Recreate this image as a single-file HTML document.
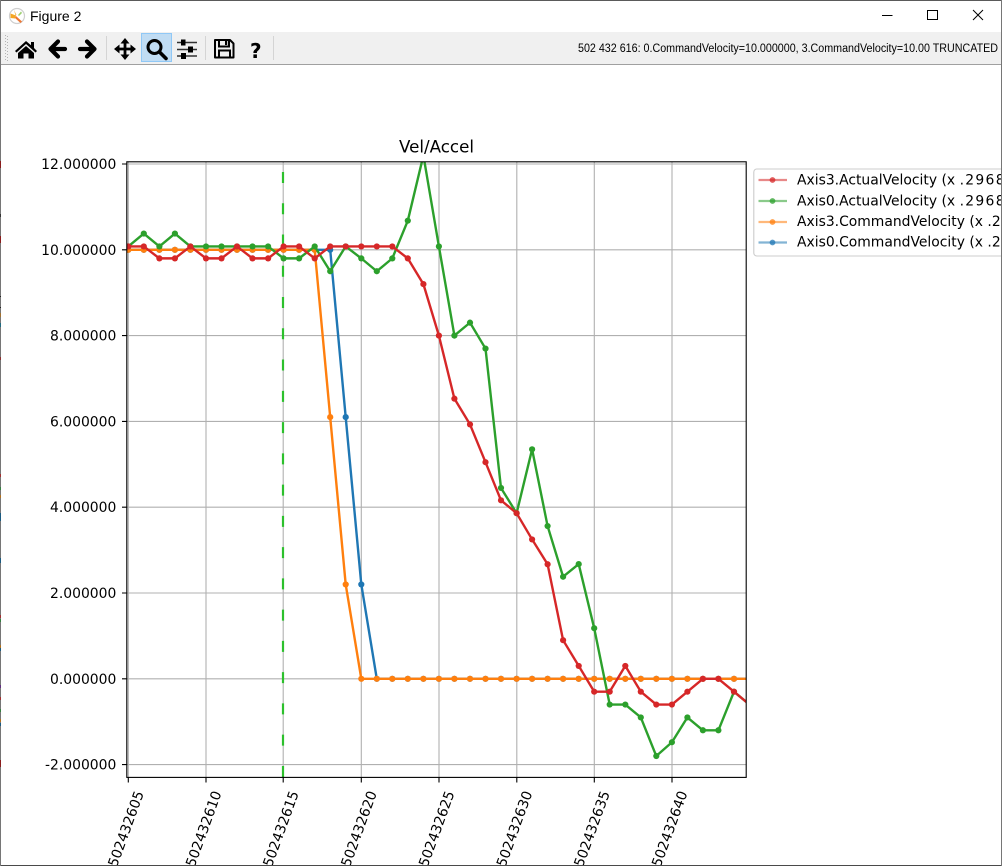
<!DOCTYPE html>
<html>
<head>
<meta charset="utf-8">
<title>Figure 2</title>
<style>
html,body{margin:0;padding:0;width:1002px;height:866px;overflow:hidden;background:#fff}
svg{display:block}
.d{font-family:"DejaVu Sans",sans-serif;font-size:13.9px;fill:#000}
.l{fill:none;stroke-linejoin:round;stroke-linecap:square}
</style>
</head>
<body>
<svg width="1002" height="866" viewBox="0 0 1002 866" xmlns="http://www.w3.org/2000/svg">
<defs>
<clipPath id="ax"><rect x="127" y="162" width="619" height="615"/></clipPath>
<clipPath id="lg"><rect x="750" y="160" width="251" height="110"/></clipPath>
<marker id="mr" markerUnits="userSpaceOnUse" markerWidth="10" markerHeight="10" refX="5" refY="5"><circle cx="5" cy="5" r="3.1" fill="#d62728"/></marker>
<marker id="mg" markerUnits="userSpaceOnUse" markerWidth="10" markerHeight="10" refX="5" refY="5"><circle cx="5" cy="5" r="3.1" fill="#2ca02c"/></marker>
<marker id="mo" markerUnits="userSpaceOnUse" markerWidth="10" markerHeight="10" refX="5" refY="5"><circle cx="5" cy="5" r="3.1" fill="#ff7f0e"/></marker>
<marker id="mb" markerUnits="userSpaceOnUse" markerWidth="10" markerHeight="10" refX="5" refY="5"><circle cx="5" cy="5" r="3.1" fill="#1f77b4"/></marker>
</defs>

<!-- title bar -->
<circle cx="17" cy="16" r="7.5" fill="#fff" stroke="#cfcfcf" stroke-width="1.2"/>
<path d="M10.5 13.5L16 15.5L15 18.5L10.5 18Z" fill="#f5a623"/>
<path d="M16 16L22 21.5L20.5 23L15 18Z" fill="#ee7733"/>
<path d="M14 10L16.5 15L15.5 15.5Z" fill="#f0b050"/>
<path d="M18 15L21 11.5L22 13L19 16Z" fill="#9ccf70"/>
<text x="30" y="21" font-family="'Liberation Sans',sans-serif" font-size="14" fill="#000">Figure 2</text>
<path d="M882 15.5H892.5" stroke="#000" stroke-width="1"/>
<rect x="927.5" y="10.5" width="10" height="9" fill="none" stroke="#000" stroke-width="1"/>
<path d="M973 10L983 20M983 10L973 20" stroke="#000" stroke-width="1"/>

<!-- toolbar -->
<rect x="0" y="32" width="1002" height="32" fill="#f0f0f0"/>
<rect x="0" y="64" width="1002" height="1" fill="#a0a0a0"/>
<path d="M5.5 35V61M7.5 36V61" stroke="#b4b4b4" stroke-width="1" stroke-dasharray="1 2"/>
<path d="M106.5 36V60M205.5 36V60M273.5 36V60" stroke="#d4d4d4" stroke-width="1"/>
<rect x="141.5" y="33.5" width="30" height="28" fill="#c0dcf3" stroke="#90c8f6" stroke-width="1"/>

<!-- home -->
<path d="M26 41L31 45.3V42H34V48L37 51L35.5 52.5L26 44L16.5 52.5L15 51Z" fill="#000"/>
<path d="M26 46L34 53V58.5H28.5V53.5H23.5V58.5H18V53Z" fill="#000"/>
<!-- back -->
<path d="M65 49H51M58 41.5L50.5 49L58 56.5" fill="none" stroke="#000" stroke-width="4.2" stroke-linecap="round" stroke-linejoin="round"/>
<!-- forward -->
<path d="M80 49H94M87 41.5L94.5 49L87 56.5" fill="none" stroke="#000" stroke-width="4.2" stroke-linecap="round" stroke-linejoin="round"/>
<!-- move -->
<path d="M117 49H133M125 41V57" stroke="#000" stroke-width="2.8"/>
<path d="M125 38L129.5 43.5H120.5ZM125 60L129.5 54.5H120.5ZM114 49L119.5 44.5V53.5ZM136 49L130.5 44.5V53.5Z" fill="#000"/>
<!-- zoom -->
<circle cx="154.5" cy="47" r="6.5" fill="none" stroke="#000" stroke-width="3"/>
<path d="M159.5 52L166 58.5" stroke="#000" stroke-width="3.6" stroke-linecap="round"/>
<!-- configure -->
<path d="M177 42.5H197M177 49.5H197M177 56H197" stroke="#333" stroke-width="1.4"/>
<path d="M181 39.5H185.5V45.5H181ZM188 46.5H193V52.5H188ZM181 53H186V59H181Z" fill="#000"/>
<!-- save -->
<path d="M215 40H230L233.5 43.5V57.5H215Z" fill="none" stroke="#000" stroke-width="2" stroke-linejoin="round"/>
<path d="M219 40V46.5H229V40" fill="none" stroke="#000" stroke-width="2"/>
<rect x="225" y="41" width="2.2" height="4" fill="#000"/>
<path d="M219 57V50.5H230V57" fill="none" stroke="#000" stroke-width="2"/>
<!-- help -->
<text x="255.8" y="58" text-anchor="middle" font-family="'DejaVu Sans',sans-serif" font-weight="bold" font-size="20" fill="#000">?</text>

<text x="578" y="52" font-family="'Liberation Sans',sans-serif" font-size="11.5" fill="#000" textLength="420" lengthAdjust="spacingAndGlyphs">502 432 616: 0.CommandVelocity=10.000000, 3.CommandVelocity=10.00 TRUNCATED</text>

<!-- axes background -->
<rect x="127" y="162" width="619" height="615" fill="#fff"/>

<!-- grid -->
<g stroke="#b0b0b0" stroke-width="1.1" fill="none">
<path d="M128.3 162V777M206 162V777M283.2 162V777M361.3 162V777M439 162V777M516.8 162V777M594.3 162V777M672 162V777"/>
<path d="M127 164H746M127 249.8H746M127 335.6H746M127 421.4H746M127 507.2H746M127 593H746M127 678.8H746M127 764.6H746"/>
</g>

<!-- vertical marker -->
<path d="M283 172V777" stroke="#2cc02c" stroke-width="2.2" stroke-dasharray="11 20.26" fill="none"/>

<g clip-path="url(#ax)">
<g transform="matrix(1 0 0 0.99767 0 1.38)">
<polyline class="l" stroke="#1f77b4" stroke-width="2.4" marker-start="url(#mb)" marker-mid="url(#mb)" marker-end="url(#mb)" points="128.3,249 143.8,249 159.4,249 174.9,249 190.4,249 206,249 221.5,249 237,249 252.5,249 268.1,249 283.6,249 299.1,249 314.7,249 330.2,249 345.7,416.7 361.3,584.4 376.8,679 392.3,679 407.8,679 423.4,679 438.9,679 454.4,679 470,679 485.5,679 501,679 516.6,679 532.1,679 547.6,679 563.1,679 578.7,679 594.2,679 609.7,679 625.3,679 640.8,679 656.3,679 671.9,679 687.4,679 702.9,679 718.4,679 734,679 749.5,679"/>
<polyline class="l" stroke="#ff7f0e" stroke-width="2.4" marker-start="url(#mo)" marker-mid="url(#mo)" marker-end="url(#mo)" points="128.3,249 143.8,249 159.4,249 174.9,249 190.4,249 206,249 221.5,249 237,249 252.5,249 268.1,249 283.6,249 299.1,249 314.7,249 330.2,416.7 345.7,584.4 361.3,679 376.8,679 392.3,679 407.8,679 423.4,679 438.9,679 454.4,679 470,679 485.5,679 501,679 516.6,679 532.1,679 547.6,679 563.1,679 578.7,679 594.2,679 609.7,679 625.3,679 640.8,679 656.3,679 671.9,679 687.4,679 702.9,679 718.4,679 734,679 749.5,679"/>
<polyline class="l" stroke="#2ca02c" stroke-width="2.4" marker-start="url(#mg)" marker-mid="url(#mg)" marker-end="url(#mg)" points="128.3,245.6 143.8,232.7 159.4,245.6 174.9,232.7 190.4,245.6 206,245.6 221.5,245.6 237,245.6 252.5,245.6 268.1,245.6 283.6,257.6 299.1,257.6 314.7,245.6 330.2,270.5 345.7,245.6 361.3,257.6 376.8,270.5 392.3,257.6 407.8,219.8 423.4,154.4 438.9,245.6 454.4,335 470,322 485.5,348 501,487.7 516.6,513 532.1,449 547.6,525.9 563.1,576.7 578.7,564 594.2,628.3 609.7,704.8 625.3,704.8 640.8,717.7 656.3,756.4 671.9,742.6 687.4,717.7 702.9,730.6 718.4,730.6 734,691.9 749.5,704.8"/>
<polyline class="l" stroke="#d62728" stroke-width="2.4" marker-start="url(#mr)" marker-mid="url(#mr)" marker-end="url(#mr)" points="128.3,245.6 143.8,245.6 159.4,257.6 174.9,257.6 190.4,245.6 206,257.6 221.5,257.6 237,245.6 252.5,257.6 268.1,257.6 283.6,245.6 299.1,245.6 314.7,257.6 330.2,245.6 345.7,245.6 361.3,245.6 376.8,245.6 392.3,245.6 407.8,257.6 423.4,283.4 438.9,335 454.4,398.2 470,424 485.5,461.9 501,500.1 516.6,513 532.1,539.3 547.6,564.2 563.1,640.3 578.7,666.1 594.2,691.9 609.7,691.9 625.3,666.1 640.8,691.9 656.3,704.8 671.9,704.8 687.4,691.9 702.9,679 718.4,679 734,691.9 749.5,704.8"/>
</g>
</g>

<!-- spines -->
<rect x="126.8" y="161.8" width="619.4" height="615.6" fill="none" stroke="#000" stroke-width="1.1"/>

<!-- y ticks -->
<path d="M122 164H127M122 249.8H127M122 335.6H127M122 421.4H127M122 507.2H127M122 593H127M122 678.8H127M122 764.6H127" stroke="#000" stroke-width="1.1"/>
<!-- x ticks -->
<path d="M128.3 777V782.5M206 777V782.5M283.2 777V782.5M361.3 777V782.5M439 777V782.5M516.8 777V782.5M594.3 777V782.5M672 777V782.5" stroke="#000" stroke-width="1.1"/>

<g class="d" text-anchor="end">
<text x="116.3" y="169">12.000000</text>
<text x="116.3" y="254.8">10.000000</text>
<text x="116.3" y="340.6">8.000000</text>
<text x="116.3" y="426.4">6.000000</text>
<text x="116.3" y="512.2">4.000000</text>
<text x="116.3" y="598">2.000000</text>
<text x="116.3" y="683.8">0.000000</text>
<text x="116.3" y="769.6">-2.000000</text>
</g>

<g class="d">
<text transform="translate(116.8 867.8) rotate(-70)">502432605</text>
<text transform="translate(194.5 867.8) rotate(-70)">502432610</text>
<text transform="translate(271.7 867.8) rotate(-70)">502432615</text>
<text transform="translate(349.8 867.8) rotate(-70)">502432620</text>
<text transform="translate(427.5 867.8) rotate(-70)">502432625</text>
<text transform="translate(505.3 867.8) rotate(-70)">502432630</text>
<text transform="translate(582.8 867.8) rotate(-70)">502432635</text>
<text transform="translate(660.5 867.8) rotate(-70)">502432640</text>
</g>

<text x="436.5" y="152.7" text-anchor="middle" font-family="'DejaVu Sans',sans-serif" font-size="16.7" fill="#000">Vel/Accel</text>

<!-- legend -->
<g clip-path="url(#lg)">
<rect x="753.8" y="169" width="270" height="87" rx="3" ry="3" fill="#fff" stroke="#cccccc" stroke-width="1.1"/>
<g stroke-width="2.2" opacity="0.55">
<path d="M758.5 180H787" stroke="#d62728"/>
<path d="M758.5 201H787" stroke="#2ca02c"/>
<path d="M758.5 222H787" stroke="#ff7f0e"/>
<path d="M758.5 242.5H787" stroke="#1f77b4"/>
</g>
<circle cx="772.5" cy="180" r="2.9" fill="#d62728" opacity=".75"/>
<circle cx="772.5" cy="201" r="2.9" fill="#2ca02c" opacity=".75"/>
<circle cx="772.5" cy="222" r="2.9" fill="#ff7f0e" opacity=".75"/>
<circle cx="772.5" cy="242.5" r="2.9" fill="#1f77b4" opacity=".75"/>
<g class="d">
<text x="797" y="184.6">Axis3.ActualVelocity (x <tspan letter-spacing="1.3">.296848)</tspan></text>
<text x="797" y="205.3">Axis0.ActualVelocity (x <tspan letter-spacing="1.3">.296848)</tspan></text>
<text x="797" y="226">Axis3.CommandVelocity (x .296848)</text>
<text x="797" y="246.7">Axis0.CommandVelocity (x .296848)</text>
</g>
</g>

<!-- window border -->
<rect x="0" y="0" width="1002" height="1" fill="#5a5a5a"/>
<rect x="0" y="865" width="1002" height="1" fill="#4a4a4a"/>
<rect x="0" y="0" width="1" height="866" fill="#767676"/>
<rect x="1001" y="0" width="1" height="866" fill="#767676"/>
<g>
<rect x="0" y="161" width="1" height="7" fill="#8a1c1c"/>
<rect x="0" y="236" width="1" height="7" fill="#8a1c1c"/>
<rect x="0" y="214" width="1" height="3" fill="#333"/>
<rect x="0" y="296" width="1" height="1" fill="#222"/>
<rect x="0" y="307" width="1" height="1" fill="#222"/>
<rect x="0" y="313" width="1" height="4" fill="#a07030"/>
<rect x="0" y="323" width="1" height="4" fill="#206a80"/>
<rect x="0" y="357" width="1" height="3" fill="#8a3030"/>
<rect x="0" y="474" width="1" height="3" fill="#a03030"/>
<rect x="0" y="487" width="1" height="3" fill="#358040"/>
<rect x="0" y="495" width="1" height="3" fill="#b07020"/>
<rect x="0" y="513" width="1" height="8" fill="#1a5a80"/>
<rect x="0" y="558" width="1" height="5" fill="#1a5a80"/>
<rect x="0" y="615" width="1" height="3" fill="#a03030"/>
<rect x="0" y="619" width="1" height="3" fill="#358040"/>
<rect x="0" y="645" width="1" height="3" fill="#b07020"/>
<rect x="0" y="648" width="1" height="3" fill="#1a5a80"/>
<rect x="0" y="685" width="1" height="3" fill="#603080"/>
<rect x="0" y="697" width="1" height="3" fill="#a03030"/>
<rect x="0" y="709" width="1" height="3" fill="#358040"/>
<rect x="0" y="719" width="1" height="3" fill="#b07020"/>
<rect x="0" y="723" width="1" height="3" fill="#1a5a80"/>
<rect x="0" y="760" width="1" height="7" fill="#8a1c1c"/>
</g>
</svg>
</body>
</html>
